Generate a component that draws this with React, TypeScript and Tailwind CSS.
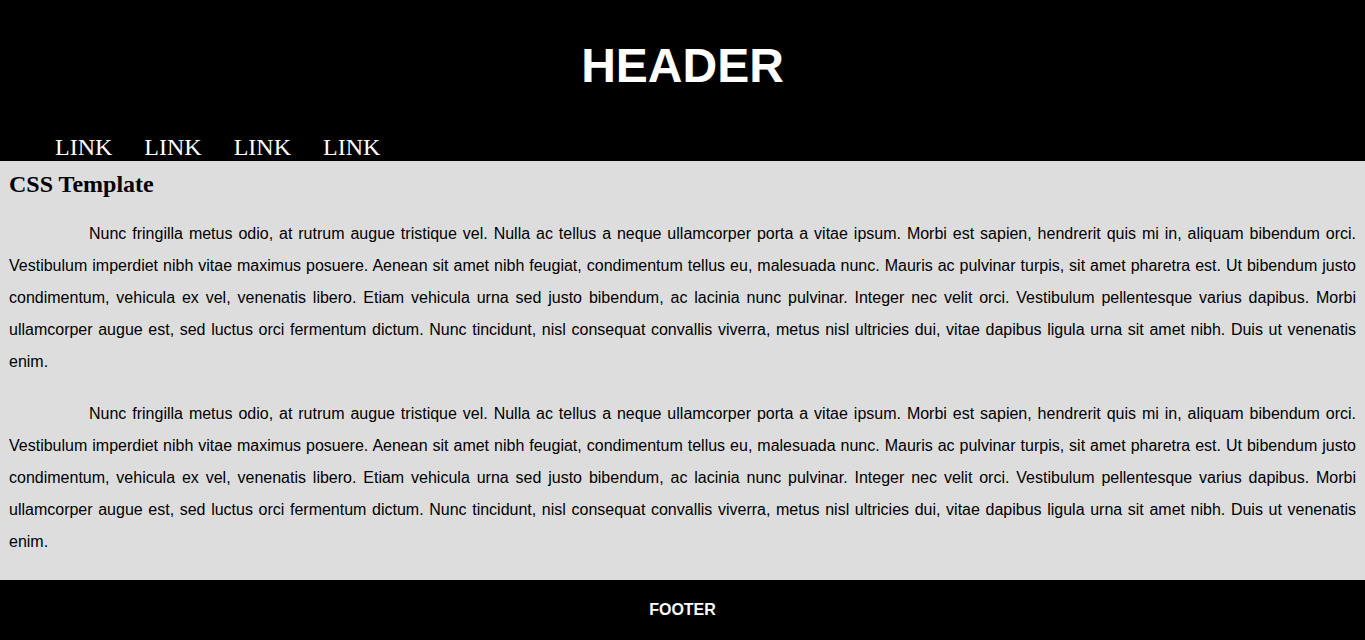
import React from "react";

const text =
  "Nunc fringilla metus odio, at rutrum augue tristique vel. Nulla ac tellus a neque ullamcorper porta a vitae ipsum. Morbi est sapien, hendrerit quis mi in, aliquam bibendum orci. Vestibulum imperdiet nibh vitae maximus posuere. Aenean sit amet nibh feugiat, condimentum tellus eu, malesuada nunc. Mauris ac pulvinar turpis, sit amet pharetra est. Ut bibendum justo condimentum, vehicula ex vel, venenatis libero. Etiam vehicula urna sed justo bibendum, ac lacinia nunc pulvinar. Integer nec velit orci. Vestibulum pellentesque varius dapibus. Morbi ullamcorper augue est, sed luctus orci fermentum dictum. Nunc tincidunt, nisl consequat convallis viverra, metus nisl ultricies dui, vitae dapibus ligula urna sit amet nibh. Duis ut venenatis enim.";

export default function App() {
  return (
    <div className="flex h-[640px] flex-col overflow-hidden">
      <header className="flex h-[161px] flex-col bg-black text-white">
        <h1 className="pt-[38px] text-center font-['Liberation_Sans',Arial,sans-serif] text-[48px] font-bold leading-[56px]">
          HEADER
        </h1>
        <nav className="mt-auto flex gap-[32px] pb-[2px] pl-[55px] font-['Liberation_Serif','Times_New_Roman',serif] text-[24px] leading-[24px]">
          <a href="#">LINK</a>
          <a href="#">LINK</a>
          <a href="#">LINK</a>
          <a href="#">LINK</a>
        </nav>
      </header>
      <main className="flex-1 bg-[#dddddd] px-[9px] pt-[9px] text-black">
        <h2 className="font-['Liberation_Serif','Times_New_Roman',serif] text-[24px] font-bold leading-[28px]">
          CSS Template
        </h2>
        <p className="mt-[20px] text-justify indent-[80px] font-['Liberation_Sans',Arial,sans-serif] text-[16px] leading-[32px]">
          {text}
        </p>
        <p className="mt-[20px] text-justify indent-[80px] font-['Liberation_Sans',Arial,sans-serif] text-[16px] leading-[32px]">
          {text}
        </p>
      </main>
      <footer className="flex h-[60px] items-center justify-center bg-black font-['Liberation_Sans',Arial,sans-serif] text-[16px] font-bold text-white">
        FOOTER
      </footer>
    </div>
  );
}
